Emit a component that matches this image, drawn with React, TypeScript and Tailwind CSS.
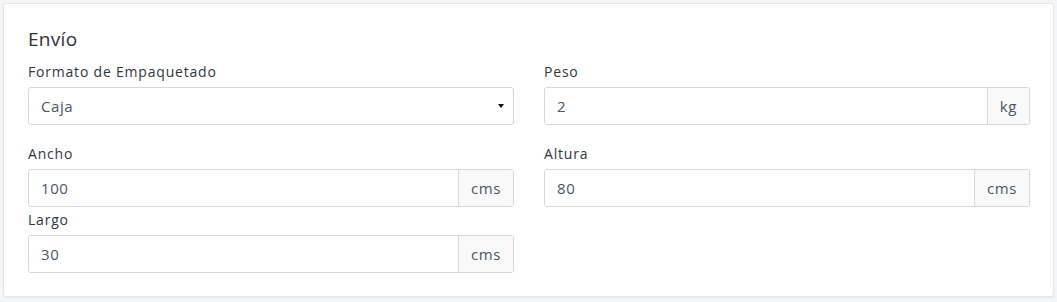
interface FieldProps {
  label: string;
  value: string;
  unit?: string;
  className?: string;
}

function Field({ label, value, unit, className = "" }: FieldProps) {
  return (
    <div className={className}>
      <label className="block text-[14px] leading-[18px] tracking-[0.8px] text-[#30363f] mb-[6px]">{label}</label>
      <div className="flex h-[38px] rounded-[3px] border border-[#d3d8de] overflow-hidden">
        <div className="flex-1 flex items-center pl-3 text-[15px] tracking-[0.6px] text-[#48566a] bg-white">{value}</div>
        {unit && (
          <div className="flex items-center px-3 border-l border-[#d3d8de] bg-[#f9f9fa] text-[15px] tracking-[0.6px] text-[#48566a]">
            {unit}
          </div>
        )}
      </div>
    </div>
  );
}

export default function App() {
  return (
    <div
      className="min-h-screen bg-[#f4f5f7] pt-[3px] pl-[3px] pr-[3px]"
      style={{ fontFamily: '"Open Sans", "Liberation Sans", sans-serif' }}
    >
      <div className="w-[1051px] bg-white border border-[#e3e6ea] rounded-[3px] shadow-[0_1px_2px_rgba(0,0,0,0.06)] pt-[23px] pb-[23px] pl-[24px] pr-[23px]">
        <h2 className="text-[19px] leading-[24px] tracking-[0.3px] text-[#2b3038] mb-[12px]">Envío</h2>
        <div className="grid grid-cols-2 gap-x-[30px]">
          <div className="mb-[20px]">
            <label className="block text-[14px] leading-[18px] tracking-[0.8px] text-[#30363f] mb-[6px]">Formato de Empaquetado</label>
            <div className="flex items-center justify-between h-[38px] rounded-[3px] border border-[#d3d8de] pl-3 pr-[9px] text-[15px] tracking-[0.6px] text-[#48566a]">
              <span>Caja</span>
              <span className="w-0 h-0 border-l-[3.5px] border-r-[3.5px] border-t-[4px] border-l-transparent border-r-transparent border-t-[#111]" />
            </div>
          </div>
          <Field label="Peso" value="2" unit="kg" className="mb-[20px]" />
          <Field label="Ancho" value="100" unit="cms" className="mb-[4px]" />
          <Field label="Altura" value="80" unit="cms" className="mb-[4px]" />
          <Field label="Largo" value="30" unit="cms" />
        </div>
      </div>
    </div>
  );
}
